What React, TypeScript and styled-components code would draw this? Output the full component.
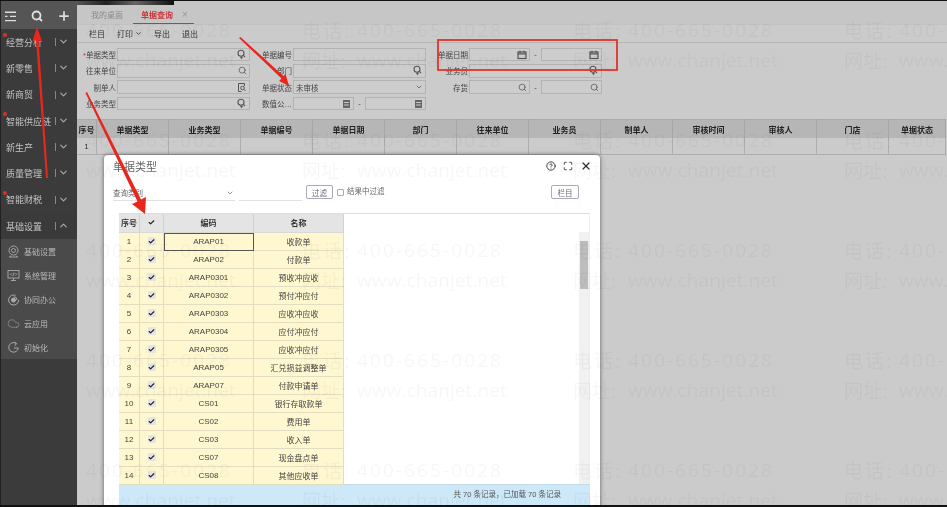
import React from "react";
import styled, { createGlobalStyle } from "styled-components";
import { Search, Cloud, Check, X, ChevronDown, ChevronUp, Maximize, CircleHelp, Plus } from "lucide-react";

const Global = createGlobalStyle`
  html, body { margin: 0; padding: 0; background: #000; }
  body { font-family: "Liberation Sans", "Noto Sans CJK SC", sans-serif; }
  * { box-sizing: border-box; }
`;
const Page = styled.div`
  position: relative; width: 947px; height: 507px; overflow: hidden;
  border-top: 1px solid #111; border-bottom: 2px solid #111;
  display: flex; background: #cbcbcb; filter: blur(0.3px);
`;
const Side = styled.aside`
  width: 77px; flex: none; background: #3b3b3b; color: #c4c4c4; display: flex; flex-direction: column;
  position: relative; z-index: 3; border-left: 1px solid #222;
`;
const SideTop = styled.div`
  height: 28px; background: #555; display: flex; align-items: center; padding: 2px 6px 0 4px; justify-content: space-between; color: #ddd;
`;
const SideItem = styled.div<{ $open?: boolean }>`
  height: 26.3px; display: flex; align-items: center; position: relative; padding-left: 5px; font-size: 9px;
  background: ${(p) => (p.$open ? "#3a3a3a" : "transparent")}; white-space: nowrap;
  &:after { content: ""; position: absolute; left: 54px; top: 9px; height: 8px; width: 1px; background: #888; }
  svg { position: absolute; left: 57px; top: 7px; }
`;
const Dot = styled.i`
  position: absolute; left: 2px; top: 4px; width: 4px; height: 4px; border-radius: 50%; background: #d9302c;
`;
const SubList = styled.div`
  background: #4a4a4a; display: flex; flex-direction: column;
`;
const SubItem = styled.div`
  height: 24px; display: flex; align-items: center; gap: 4px; padding-left: 6px; font-size: 8px; color: #b8b8b8;
`;
const Main = styled.main`
  flex: 1; min-width: 0; display: flex; flex-direction: column; position: relative;
`;
const TabBar = styled.div`
  height: 23px; display: flex; align-items: flex-end; padding-left: 6px; font-size: 8px; color: #8a8a8a; background: #c6c6c6;
`;
const Tab = styled.div<{ $on?: boolean }>`
  height: 15px; padding: 0 8px; display: flex; gap: 8px; align-items: flex-start; width: 61px; flex: none;
  margin-left: ${(p) => (p.$on ? "2px" : "0")};
  ${(p) => (p.$on ? "" : "width: 48px;")}
  color: ${(p) => (p.$on ? "#c8363c" : "#8a8a8a")}; font-weight: ${(p) => (p.$on ? 700 : 400)}; white-space: nowrap;
  border-bottom: 1px solid ${(p) => (p.$on ? "#c8363c" : "transparent")};
`;
const TabClose = styled.span`
  color: #999; font-weight: 400; font-size: 10px; line-height: 11px; margin-left: 1px;
`;
const Toolbar = styled.div`
  height: 19px; display: flex; align-items: center; gap: 12px; padding-left: 12px; font-size: 8px; color: #333;
  background: #cbcbcb; border-bottom: 1px solid #b5b5b5; border-top: 1px solid #c2c2c2;
  span { display: inline-flex; align-items: center; gap: 2px; }
`;
const FormArea = styled.div`
  height: 76px; padding-top: 3.5px; display: grid; grid-template-columns: 173px 176px 176px; grid-auto-rows: 16.3px; align-items: center;
`;
const Field = styled.div<{ $l?: number }>`
  display: grid; grid-template-columns: ${(p) => p.$l ?? 39}px 1fr; gap: 1px; align-items: center; font-size: 7.5px; color: #444; white-space: nowrap; height: 14px;
  label { text-align: right; overflow: hidden; }
  label b { color: #c33; font-weight: 400; }
`;
const Inputs = styled.div`
  display: flex; align-items: center; gap: 4px; height: 13.5px; font-size: 7.5px; color: #444;
`;
const Input = styled.div`
  flex: 1; height: 13.5px; border: 1px solid #b2b2b2; background: #cdcdcd; display: flex; align-items: center; justify-content: space-between; padding: 0 2px; color: #444;
  svg { margin-left: auto; flex: none; }
`;
const Table = styled.div`
  display: grid; grid-template-columns: 20px repeat(11, 72px) 57px; font-size: 8px; color: #222;
`;
const Th = styled.div`
  height: 19px; background: #b6b6b6; border-right: 1px solid #a6a6a6; border-top: 1px solid #aaa; display: flex; align-items: center; justify-content: center; font-weight: 700; white-space: nowrap;
`;
const Td = styled.div`
  height: 17px; background: #cbcbcb; border-right: 1px solid #aeaeae; border-bottom: 1px solid #aeaeae; display: flex; align-items: center; justify-content: center; color: #333;
`;
const Watermarks = styled.div`
  position: absolute; left: 0; top: 14px; width: 1120px; display: grid; grid-template-columns: repeat(4, 271px); padding-left: 31px;
  grid-template-rows: repeat(5, 30px 80px);
  pointer-events: none; z-index: 2; font-family: "Open Sans", "Noto Sans CJK SC", sans-serif; font-size: 19px; color: rgba(0,0,0,0.035); white-space: nowrap;
`;
const Mark = styled.div<{ $sp: number }>`
  display: flex; align-items: center; height: 30px; letter-spacing: ${(p) => p.$sp}px;
`;
const MarkLabel = styled.span`
  width: 55px; flex: none;
`;
const Modal = styled.section`
  position: absolute; left: 104px; top: 154px; width: 496px; height: 360px; background: #fff; border-radius: 4px 4px 0 0;
  box-shadow: 0 0 4px rgba(0,0,0,0.55); z-index: 1; display: flex; flex-direction: column; color: #444;
`;
const ModalHead = styled.header`
  height: 21px; display: flex; align-items: center; padding: 0 8px 0 9px; font-size: 11px; color: #666;
  h2 { font: inherit; margin: 0; flex: 1; }
  div { display: flex; gap: 7px; align-items: center; color: #333; }
`;
const Filter = styled.div`
  height: 37px; padding: 9px 21px 0 9px; display: flex; align-items: flex-start; font-size: 7.5px; color: #666;
`;
const Under = styled.div<{ $w: number }>`
  width: ${(p) => p.$w}px; height: 16px; border-bottom: 1px solid #e2e2e2; display: flex; align-items: center; justify-content: space-between; margin-right: 4px; padding-right: 1px;
`;
const Btn = styled.div<{ $w: number }>`
  width: ${(p) => p.$w}px; height: 14px; border: 1px solid #aab; border-radius: 2px; display: flex; align-items: center; justify-content: center; color: #667; background: #fff;
`;
const Box = styled.i`
  width: 7px; height: 7px; border: 1px solid #aaa; border-radius: 1px; margin: 3.5px 3px 0 4px; display: block;
`;
const Spacer = styled.div`
  flex: 1;
`;
const Plain = styled.span`
  line-height: 14px;
`;
const GridWrap = styled.div`
  margin: 0 10px 0 15px; height: 271px; border-top: 1px solid #ddd; border-right: 1px solid #eee; position: relative; display: flex; flex-direction: column;
`;
const MGrid = styled.div`
  display: grid; grid-template-columns: 21px 24px 90px 90px; font-size: 8px; color: #444;
`;
const MTh = styled.div`
  height: 18.5px; background: #e4e4e4; border-right: 1px solid #d2d2d2; border-bottom: 1px solid #d8d8d8; display: flex; align-items: center; justify-content: center; font-weight: 700; color: #333;
`;
const MTd = styled.div<{ $sel?: boolean }>`
  height: 18px; background: #fff7cf; border-right: 1px solid #e2dcc0; border-bottom: 1px solid #e2dcc0; display: flex; align-items: center; justify-content: center; white-space: nowrap;
  ${(p) => (p.$sel ? "outline: 1px solid #555; outline-offset: -1px;" : "")}
`;
const CheckBox = styled.span`
  width: 8px; height: 8px; background: #e4e4e4; border-radius: 1.5px; display: inline-flex; align-items: center; justify-content: center; color: #222;
`;
const Scroll = styled.div`
  position: absolute; right: 0; top: 18px; bottom: 0; width: 10px; background: #f1f1f1; display: flex; flex-direction: column; align-items: center;
`;
const Thumb = styled.div`
  width: 8px; height: 48px; background: #bdbdbd; margin-top: 9px;
`;
const Foot = styled.div`
  margin: 0 10px 0 15px; height: 24px; background: #cde8f8; border-top: 1px solid #c5dce8; font-size: 7.5px; color: #555; display: flex; align-items: flex-start; justify-content: flex-end; padding: 3px 29px 0 0;
`;
const Overlay = styled.svg`
  position: absolute; left: 0; top: -1px; width: 947px; height: 507px; z-index: 5; pointer-events: none;
`;
const Photo = styled.div`
  position: absolute; left: 0; top: 0; width: 97px; height: 4px; background: linear-gradient(90deg,#555,#222 30%,#666 60%,#111); z-index: 1;
`;

const SearchPlus = () => (
  <svg width="11" height="11" viewBox="0 0 11 11" fill="none" stroke="#555" strokeWidth="1.1">
    <circle cx="5" cy="4.2" r="3" /><path d="M7.4 6.4 9 8" /><path d="M4 8.6h3M5.5 7.2v3" strokeWidth=".8" />
  </svg>
);
const SearchIcon = () => <Search size={9} color="#555" strokeWidth={2} />;
const Doc = () => (
  <svg width="11" height="11" viewBox="0 0 11 11" fill="none" stroke="#555" strokeWidth="1">
    <path d="M8.5 4V1.5h-6v8h3" /><circle cx="6.5" cy="6" r="1.8" /><path d="M8 7.4 9.4 9" />
  </svg>
);
const Cal = () => (
  <svg width="10" height="10" viewBox="0 0 10 10" fill="none" stroke="#555" strokeWidth="1.2">
    <rect x="1" y="2" width="8" height="6.5" /><path d="M3 .8v2M7 .8v2M1 3.8h8" />
  </svg>
);
const Calc = () => (
  <svg width="9" height="10" viewBox="0 0 9 10" fill="#666">
    <path d="M1 1h7v8H1z" /><path d="M2.2 3h4.6v1H2.2zM2.2 5.6h4.6v1H2.2z" fill="#ccc" />
  </svg>
);
const Menu = () => (
  <svg width="12" height="11" viewBox="0 0 12 11" fill="none" stroke="#ddd" strokeWidth="1.4">
    <path d="M0 1.2h11M5 5.4h6M0 5.4h2.5M0 9.6h11" />
  </svg>
);
const BoldSearch = () => <Search size={12} color="#e2e2e2" strokeWidth={3.6} />;
const CamIcon = () => (
  <svg width="13" height="13" viewBox="0 0 13 13" fill="none" stroke="#aaa" strokeWidth=".9">
    <circle cx="6.5" cy="5.5" r="4.5" /><circle cx="6.5" cy="5.5" r="2" /><path d="M2 12h9M4 10.5l-1 1.5M9 10.5l1 1.5" />
  </svg>
);
const CodeIcon = () => (
  <svg width="13" height="13" viewBox="0 0 13 13" fill="none" stroke="#aaa" strokeWidth=".9">
    <rect x="1" y="1.5" width="11" height="7.5" /><path d="M4 11.5h5M6.5 9v2.5M4.6 4l-1.2 1.3 1.2 1.2M8.4 4l1.2 1.3-1.2 1.2M7 3.6 6 7" />
  </svg>
);
const TargetIcon = () => (
  <svg width="13" height="13" viewBox="0 0 13 13" fill="none" stroke="#aaa" strokeWidth="1">
    <path d="M8.5 2.4A5 5 0 1 0 11.6 7" /><circle cx="6.5" cy="7" r="2" fill="#aaa" /><path d="M7 3.6A3.5 3.5 0 0 1 10 7" />
  </svg>
);
const InitIcon = () => (
  <svg width="13" height="13" viewBox="0 0 13 13" fill="none" stroke="#aaa" strokeWidth="1">
    <path d="M9.5 2.6A4.8 4.8 0 1 0 11.3 7H7" /><path d="M7 1l2.6 1.6L7.6 5" />
  </svg>
);

const navItems: [string, boolean][] = [
  ["经营分析", true], ["新零售", false], ["新商贸", false], ["智能供应链", true], ["新生产", false], ["质量管理", false], ["智能财税", true],
];
const heads = ["序号","单据类型","业务类型","单据编号","单据日期","部门","往来单位","业务员","制单人","审核时间","审核人","门店","单据状态"];
const rows: [string, string][] = [
  ["ARAP01","收款单"],["ARAP02","付款单"],["ARAP0301","预收冲应收"],["ARAP0302","预付冲应付"],["ARAP0303","应收冲应收"],["ARAP0304","应付冲应付"],["ARAP0305","应收冲应付"],
  ["ARAP05","汇兑损益调整单"],["ARAP07","付款申请单"],["CS01","银行存取款单"],["CS02","费用单"],["CS03","收入单"],["CS07","现金盘点单"],["CS08","其他应收单"],
];
const Tick = () => <CheckBox><Check size={7} strokeWidth={4} /></CheckBox>;

export default function App() {
  const marks: { k: string; l: string; t: string; sp: number }[] = [];
  for (let r = 0; r < 10; r++) for (let c = 0; c < 4; c++) {
    const even = r % 2 === 0;
    marks.push({ k: `${r}-${c}`, l: even ? "电话:" : "网址:", t: even ? "400-665-0028" : "www.chanjet.net", sp: even ? 2.1 : 0.1 });
  }
  return (
    <>
      <Global />
      <Page>
        <Side>
          <SideTop><Menu /><BoldSearch /><Plus size={14} strokeWidth={3} color="#ddd" /></SideTop>
          {navItems.map(([t, d]) => (
            <SideItem key={t}>{d && <Dot />}{t}<ChevronDown size={11} strokeWidth={2.5} color="#aaa" /></SideItem>
          ))}
          <SideItem $open>基础设置<ChevronUp size={11} strokeWidth={2.5} color="#aaa" /></SideItem>
          <SubList>
            <SubItem><CamIcon />基础设置</SubItem>
            <SubItem><CodeIcon />系统管理</SubItem>
            <SubItem><TargetIcon />协同办公</SubItem>
            <SubItem><Cloud size={13} strokeWidth={1} color="#aaa" />云应用</SubItem>
            <SubItem><InitIcon />初始化</SubItem>
          </SubList>
        </Side>
        <Main>
          <Photo />
          <TabBar>
            <Tab>我的桌面</Tab>
            <Tab $on>单据查询<TabClose>×</TabClose></Tab>
          </TabBar>
          <Toolbar>
            <span>栏目</span><span>打印<ChevronDown size={7} strokeWidth={3} /></span><span>导出</span><span>退出</span>
          </Toolbar>
          <FormArea>
            <Field><label><b>*</b>单据类型</label><Inputs><Input><SearchPlus /></Input></Inputs></Field>
            <Field $l={42}><label>单据编号</label><Inputs><Input /></Inputs></Field>
            <Field $l={42}><label>单据日期</label><Inputs><Input><Cal /></Input>-<Input><Cal /></Input></Inputs></Field>
            <Field><label>往来单位</label><Inputs><Input><SearchIcon /></Input></Inputs></Field>
            <Field $l={42}><label>部门</label><Inputs><Input><SearchPlus /></Input></Inputs></Field>
            <Field $l={42}><label>业务员</label><Inputs><Input><SearchPlus /></Input></Inputs></Field>
            <Field><label>制单人</label><Inputs><Input><Doc /></Input></Inputs></Field>
            <Field $l={42}><label>单据状态</label><Inputs><Input>未审核<ChevronDown size={8} strokeWidth={2} /></Input></Inputs></Field>
            <Field $l={42}><label>存货</label><Inputs><Input><SearchIcon /></Input>-<Input><SearchIcon /></Input></Inputs></Field>
            <Field><label>业务类型</label><Inputs><Input><SearchPlus /></Input></Inputs></Field>
            <Field $l={42}><label>数值公…</label><Inputs><Input><Calc /></Input>-<Input><Calc /></Input></Inputs></Field>
          </FormArea>
          <Table>
            {heads.map((h) => <Th key={h}>{h}</Th>)}
            <Td>1</Td>
            {heads.slice(1).map((h) => <Td key={h} />)}
          </Table>
        </Main>
        <Modal>
          <ModalHead>
            <h2>单据类型</h2>
            <div><CircleHelp size={10} strokeWidth={2.2} /><Maximize size={10} strokeWidth={2.2} /><X size={12} strokeWidth={2.4} /></div>
          </ModalHead>
          <Filter>
            <Under $w={122}>查询类别<ChevronDown size={8} strokeWidth={2} /></Under>
            <Under $w={63} />
            <Btn $w={27}>过滤</Btn>
            <Box />
            <Plain>结果中过滤</Plain>
            <Spacer />
            <Btn $w={28}>栏目</Btn>
          </Filter>
          <GridWrap>
            <MGrid>
              <MTh>序号</MTh><MTh><Tick /></MTh><MTh>编码</MTh><MTh>名称</MTh>
              {rows.map(([code, name], i) => (
                <React.Fragment key={code}>
                  <MTd>{i + 1}</MTd><MTd><Tick /></MTd><MTd $sel={i === 0}>{code}</MTd><MTd>{name}</MTd>
                </React.Fragment>
              ))}
            </MGrid>
            <Scroll><Thumb /></Scroll>
          </GridWrap>
          <Foot>共 70 条记录，已加载 70 条记录</Foot>
        </Modal>
        <Watermarks>
          {marks.map((m) => <Mark key={m.k} $sp={m.sp}><MarkLabel>{m.l}</MarkLabel>{m.t}</Mark>)}
        </Watermarks>
        <Overlay viewBox="0 0 947 507">
          <g fill="#e8261c">
            <path d="M37 27 42 41 38.6 40.5 48 178 46 178 36 40.6 32.5 41Z" />
            <path d="M289 86 279 81 281.5 78.5 239 38 240.5 37 283.5 76 285.5 74Z" />
            <path d="M145 214 132 204 137.5 201.5 85.5 93 87 92 141 199.5 146 197Z" />
          </g>
          <rect x="438" y="40" width="179" height="30" fill="none" stroke="#e2332b" strokeWidth="1.8" />
        </Overlay>
      </Page>
    </>
  );
}
